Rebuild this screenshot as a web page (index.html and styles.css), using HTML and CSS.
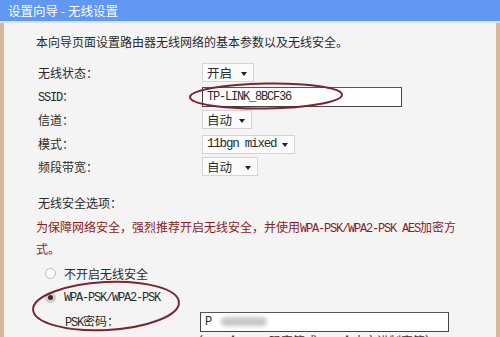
FILE: index.html
```html
<!DOCTYPE html>
<html>
<head>
    <meta charset="utf-8">
    <title>设置向导 - 无线设置</title>
    <link rel="stylesheet" href="styles.css">
</head>
<body>
    <div class="window">
        <div class="titlebar">设置向导 - 无线设置</div>
        <div class="content">
            <p class="intro">本向导页面设置路由器无线网络的基本参数以及无线安全。</p>

            <div class="form-grid">
                <div class="label">无线状态：</div>
                <div><span class="select w52">开启<i class="arrow"></i></span></div>

                <div class="label"><span class="mono">SSID</span>：</div>
                <div><span class="textbox w200"><span class="mono">TP-LINK_8BCF36</span></span></div>

                <div class="label">信道：</div>
                <div><span class="select w50">自动<i class="arrow"></i></span></div>

                <div class="label">模式：</div>
                <div><span class="select w93"><span class="mono">11bgn mixed</span><i class="arrow"></i></span></div>

                <div class="label">频段带宽：</div>
                <div><span class="select w56">自动<i class="arrow"></i></span></div>
            </div>

            <p class="section">无线安全选项：</p>
            <p class="warning">为保障网络安全，强烈推荐开启无线安全，并使用<span class="mono">WPA-PSK/WPA2-PSK AES</span>加密方式。</p>

            <div class="options">
                <div class="option"><span class="radio"></span>不开启无线安全</div>
                <div class="option"><span class="radio checked"></span><span class="mono">WPA-PSK/WPA2-PSK</span></div>
                <div class="psk-row">
                    <div class="label"><span class="mono">PSK</span>密码：</div>
                    <div><span class="textbox w249"><span class="mono">P</span><span class="blur"></span></span></div>
                </div>
                <div class="hint">（<span class="mono">8-63</span>个<span class="mono">ASCII</span>码字符或<span class="mono">8-64</span>个十六进制字符）</div>
            </div>
        </div>
    </div>

    <svg class="marks" width="500" height="337" viewBox="0 0 500 337">
        <ellipse cx="266" cy="96" rx="76" ry="12.5" transform="rotate(-1 266 96)"></ellipse>
        <ellipse cx="106" cy="306" rx="73" ry="24" transform="rotate(-3 106 306)"></ellipse>
    </svg>
</body>
</html>
```

FILE: styles.css
```css
body {
    margin: 0;
    padding: 0;
    width: 500px;
    height: 337px;
    overflow: hidden;
    font-family: "Noto Sans CJK SC", "Liberation Sans", sans-serif;
    font-size: 12px;
    color: #2b2b2b;
    background-color: #f4f4f4;
}

p {
    margin: 0;
}

.window {
    height: 337px;
    box-sizing: border-box;
    border-left: 4px solid #d8b89c;
    border-right: 4px solid #d8b89c;
    background-color: #f4f4f4;
}

.titlebar {
    height: 21px;
    line-height: 21px;
    margin-left: -4px;
    margin-right: -4px;
    padding-left: 8px;
    background-color: #6198f4;
    color: #fff;
    font-size: 12.5px;
    border-bottom: 2px solid #dfe6f1;
}

.content {
    padding: 10px 0 0 32px;
}

.mono {
    font-family: "Liberation Mono", monospace;
    letter-spacing: -1.2px;
}

.intro {
    line-height: 18px;
}

.form-grid {
    display: grid;
    grid-template-columns: 166px 1fr;
    grid-auto-rows: 23.5px;
    align-items: center;
    margin-top: 10px;
}

.label {
    padding-left: 2px;
}

.select {
    display: inline-flex;
    align-items: center;
    justify-content: space-between;
    box-sizing: border-box;
    height: 19px;
    padding: 0 6px 0 4px;
    background-color: #fbfbfb;
    border: 1px solid #d4d4d4;
    font-size: 12.5px;
}

.arrow {
    width: 0;
    height: 0;
    border-left: 3.5px solid transparent;
    border-right: 3.5px solid transparent;
    border-top: 4px solid #222;
    margin-top: 2px;
}

.textbox {
    display: inline-flex;
    align-items: center;
    box-sizing: border-box;
    height: 20px;
    padding-left: 4px;
    background-color: #fff;
    border: 1px solid #444;
    border-top-color: #555;
}

.w50 { width: 50px; }
.w52 { width: 52px; }
.w56 { width: 56px; }
.w93 { width: 93px; }
.w200 { width: 200px; }
.w249 { width: 249px; }

.section {
    margin-top: 14px;
    line-height: 19px;
    padding-left: 2px;
}

.warning {
    width: 428px;
    margin-top: 5px;
    line-height: 19px;
    color: #8a1c22;
}

.options {
    margin-top: 4px;
    padding-left: 9px;
}

.option {
    display: flex;
    align-items: center;
    height: 24px;
}

.radio {
    width: 11px;
    height: 11px;
    margin-right: 8px;
    border-radius: 50%;
    border: 1px solid #b8b8b8;
    background-color: #fff;
    box-sizing: border-box;
}

.radio.checked {
    border: 3px solid #cfcfcf;
    background-color: #2e2e2e;
}

.psk-row {
    display: grid;
    grid-template-columns: 135px 1fr;
    align-items: center;
    height: 23px;
    padding-left: 20px;
}

.psk-row .label {
    padding-left: 0;
}

.blur {
    display: inline-block;
    width: 46px;
    height: 9px;
    margin-left: 10px;
    border-radius: 5px;
    background-color: #c6c6c6;
    filter: blur(2px);
}

.hint {
    padding-left: 146px;
    line-height: 16px;
    color: #333;
}

.marks {
    position: absolute;
    top: 0;
    left: 0;
    pointer-events: none;
}

.marks ellipse {
    fill: none;
    stroke: #7b2531;
    stroke-width: 2;
}
```
